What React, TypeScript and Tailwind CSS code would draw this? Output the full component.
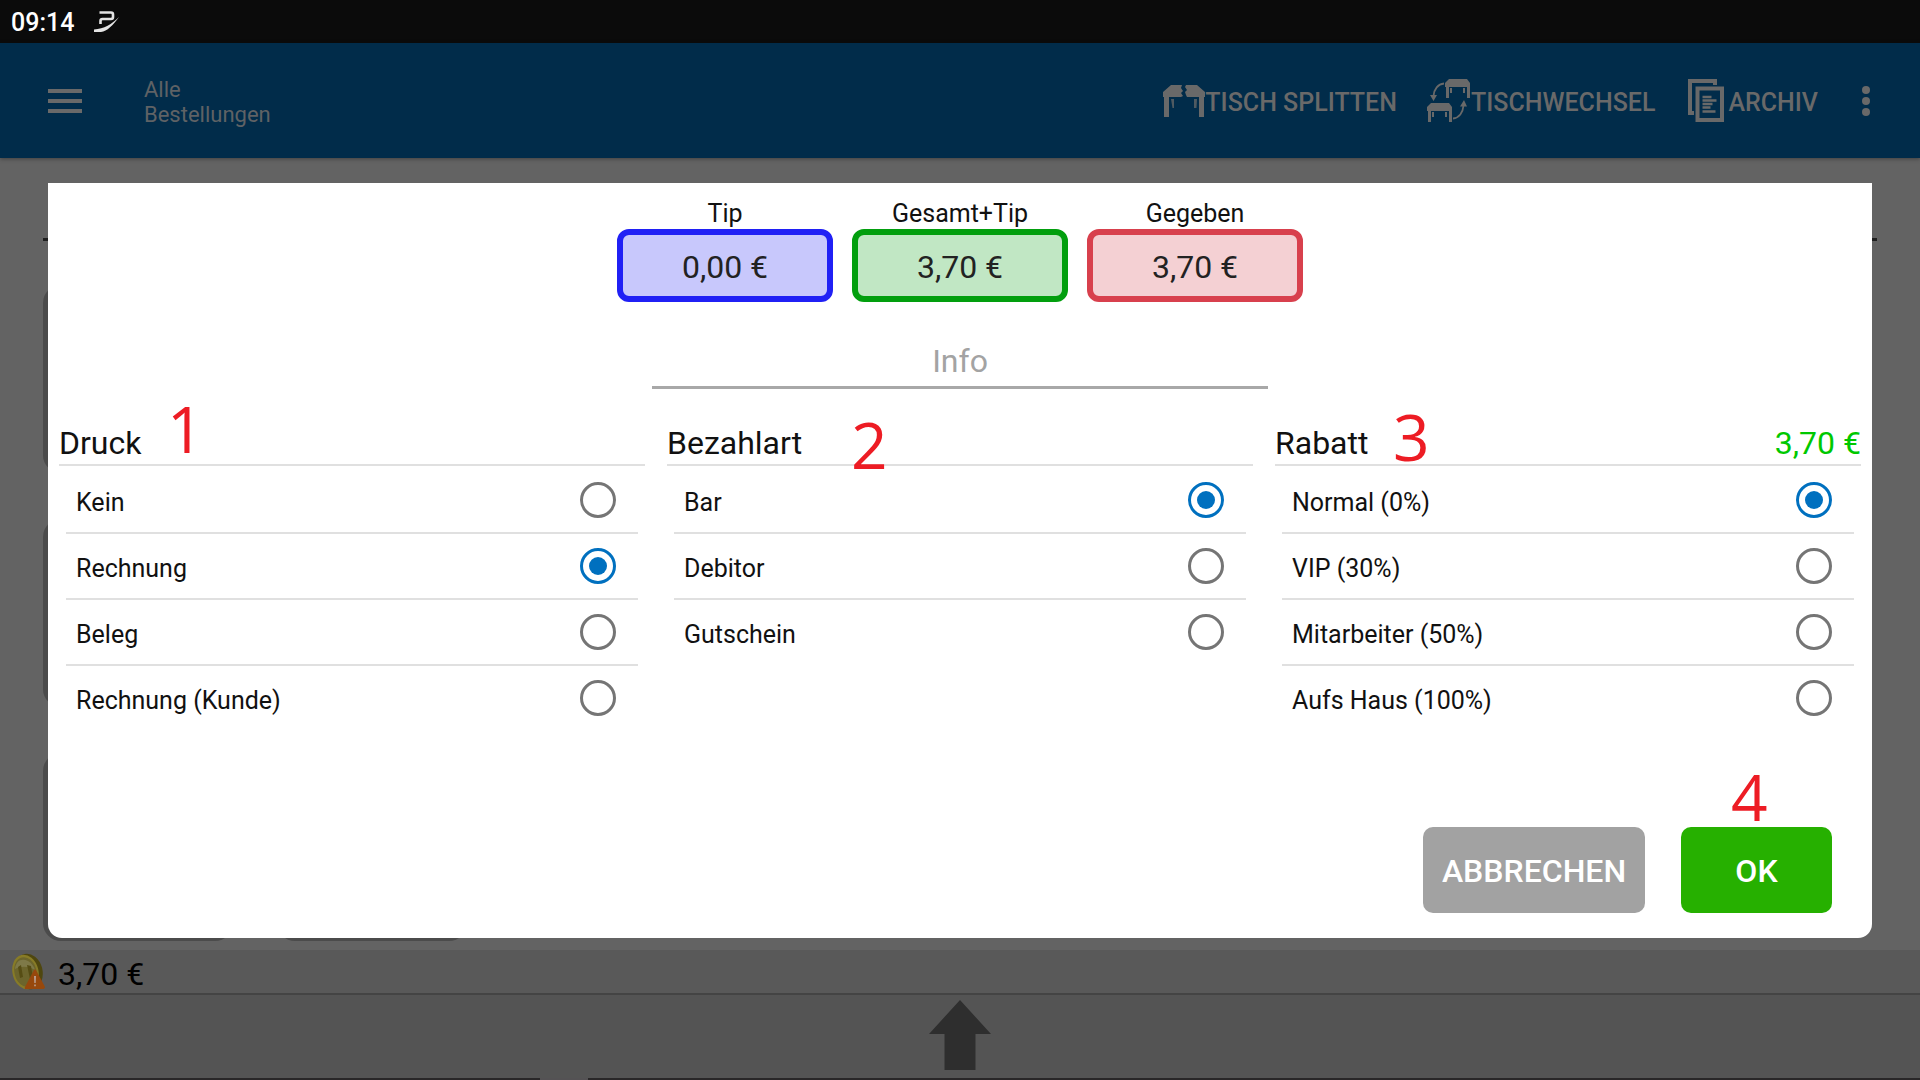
import type { ReactNode } from "react";
import clsx from "clsx";

type Group = {
  id: string;
  title: string;
  options: string[];
  selected: string;
  amount?: string;
  marker: string;
  markerClass: string;
};

const groups: Group[] = [
  {
    id: "druck",
    title: "Druck",
    options: ["Kein", "Rechnung", "Beleg", "Rechnung (Kunde)"],
    selected: "Rechnung",
    marker: "1",
    markerClass: "left-[108px] -top-6",
  },
  {
    id: "bezahlart",
    title: "Bezahlart",
    options: ["Bar", "Debitor", "Gutschein"],
    selected: "Bar",
    marker: "2",
    markerClass: "left-[184px] -top-2",
  },
  {
    id: "rabatt",
    title: "Rabatt",
    options: ["Normal (0%)", "VIP (30%)", "Mitarbeiter (50%)", "Aufs Haus (100%)"],
    selected: "Normal (0%)",
    amount: "3,70 €",
    marker: "3",
    markerClass: "left-[118px] -top-4",
  },
];

const amounts = [
  { id: "tip", label: "Tip", value: "0,00 €", box: "border-[#2020f5] bg-[#c8c8fc]" },
  { id: "gesamt", label: "Gesamt+Tip", value: "3,70 €", box: "border-[#029f0e] bg-[#c1e7c4]" },
  { id: "gegeben", label: "Gegeben", value: "3,70 €", box: "border-[#d8404d] bg-[#f4d0d3]" },
];

function BrandIcon() {
  return (
    <svg viewBox="0 0 26 22" className="w-[26px] h-[22px]" fill="none">
      <path d="M5.500 1.500H17q2 0 2 2V6q0 2-2 2H8.500q-2 0-2 2V13" stroke="#e4e4e4" strokeWidth="2.600" />
      <path d="M0 18.500C10 18 18 13 25 6C19 14 13 20.500 7 21H0Z" fill="#e4e4e4" />
    </svg>
  );
}

function SplitTableIcon() {
  return (
    <svg viewBox="0 0 42 34" className="w-[42px] h-[34px]" fill="currentColor">
      <path d="M0 8L8 1H19l-1 3 2 3-2 2 2 3-2 1H6V33H1V13H0Z" />
      <path d="M42 8L34 1H23l-1 2 2 3-2 2 1 3 1 2H36V33h5V13h1Z" />
      <path d="M8 15h3v9H9.500ZM31 15h3l-.5 9H31Z" opacity=".75" />
    </svg>
  );
}

function SwapTableIcon() {
  return (
    <svg viewBox="0 0 44 44" className="w-11 h-11" fill="currentColor">
      <path d="M18 4L22 0H40l3 4V19H40V8H22V19H19V8H18ZM23 9h2v5h-2ZM36 9h2v5h-2Z" />
      <path d="M0 28L4 24H22l3 4V43H22V32H4V43H1V32H0ZM5 33h2v5H5ZM18 33h2v5h-2Z" />
      <path d="M17 4.500C11 5 7 10 6.500 17M26 39.500c6-.5 10-6 10.500-13" fill="none" stroke="currentColor" strokeWidth="1.800" />
      <path d="M3 16h7l-3.500 6ZM33 27.500h7L37 21Z" />
    </svg>
  );
}

function ArchiveIcon() {
  return (
    <svg viewBox="0 0 36 44" className="w-9 h-11" fill="none" stroke="currentColor">
      <path d="M6 34H2V2H27V6" strokeWidth="4" />
      <path d="M9.500 9.500H34V41H9.500Z" strokeWidth="4" />
      <path d="M14.500 18h9M14.500 21.500h14M14.500 25h10M14.500 28.500h8M14.500 32.500h13" strokeWidth="2.600" />
    </svg>
  );
}

function CoinIcon() {
  return (
    <svg viewBox="0 0 36 38" className="w-9 h-[38px]">
      <ellipse cx="18.500" cy="18.500" rx="14" ry="18" transform="rotate(-14 18.500 18.500)" fill="#4f470f" />
      <ellipse cx="15.500" cy="19" rx="13" ry="17.500" transform="rotate(-14 15.500 19)" fill="#877b27" />
      <ellipse cx="15.500" cy="19" rx="11" ry="15" transform="rotate(-14 15.500 19)" fill="#6c652c" />
      <path d="M5 16C6 8 11 5 18 8C22 10 24 14 25 17C18 13 11 13 5 16Z" fill="#7e7948" />
      <path d="M8 14l3-2 2 12-3 1ZM17 12l4 1 2 12-3 1Z" fill="#564d14" />
      <path d="M24 17q1-1.500 2 0L35 34q0 2-2 2H16q-2 0-1-2Z" fill="#97480c" />
      <path d="M24 23h2l-.3 7h-1.400ZM24.200 31.500h1.600v1.800h-1.600Z" fill="#b9a091" />
    </svg>
  );
}

function HeaderAction({ icon, label, className }: { icon: ReactNode; label: string; className?: string }) {
  return (
    <button type="button" className={clsx("flex items-center text-[25px] leading-8 font-medium", className)}>
      {icon}
      <span className="pt-1">{label}</span>
    </button>
  );
}

function Marker({ value, className }: { value: string; className: string }) {
  return (
    <span
      className={clsx(
        "absolute z-10 pointer-events-none font-['Open_Sans',sans-serif] text-[64px] leading-none text-[#ed1c24]",
        className,
      )}
    >
      {value}
    </span>
  );
}

function OptionGroup({ group }: { group: Group }) {
  return (
    <section role="radiogroup" aria-labelledby={`${group.id}-title`}>
      <div className="relative flex items-center justify-between h-[45px] border-b-2 border-[#e0e0e0] text-[32px]">
        <h2 id={`${group.id}-title`}>{group.title}</h2>
        {group.amount && <span className="text-[#00c800]">{group.amount}</span>}
        <Marker value={group.marker} className={group.markerClass} />
      </div>
      <div className="px-[7px] pt-0.5">
        {group.options.map((option) => (
          <label
            key={option}
            className="flex items-center justify-between h-[66px] pl-2.5 pr-[22px] border-b-2 border-[#e0e0e0] last:border-transparent text-[25px]"
          >
            <span className="pt-1.5">{option}</span>
            <input
              type="radio"
              name={group.id}
              defaultChecked={option === group.selected}
              className="appearance-none shrink-0 w-9 h-9 p-1.5 rounded-full border-[3px] border-[#757575] bg-clip-content checked:border-[#0070bf] checked:bg-[#0070bf]"
            />
          </label>
        ))}
      </div>
    </section>
  );
}

function PaymentDialog() {
  return (
    <div
      role="dialog"
      aria-label="Bezahlen"
      className="relative flex-1 flex flex-col bg-white rounded-b-[14px] pt-4 px-[11px] pb-[25px] text-[#111]"
    >
      <div className="flex justify-center gap-[19px]">
        {amounts.map((amount) => (
          <div key={amount.id} className="flex flex-col items-center">
            <label htmlFor={amount.id} className="text-[25px] leading-[30px]">
              {amount.label}
            </label>
            <input
              id={amount.id}
              defaultValue={amount.value}
              className={clsx(
                "w-[216px] h-[73px] pt-0.5 rounded-xl border-[6px] text-center text-[32px] text-[#222]",
                amount.box,
              )}
            />
          </div>
        ))}
      </div>

      <input
        aria-label="Info"
        placeholder="Info"
        className="self-center mt-9 w-[616px] max-w-full h-[51px] pb-0.5 border-b-3 border-[#a8a8a8] text-center text-[32px] placeholder:text-[#a3a3a3]"
      />

      <div className="grid grid-cols-3 gap-[22px] mt-8">
        {groups.map((group) => (
          <OptionGroup key={group.id} group={group} />
        ))}
      </div>

      <div className="flex justify-end gap-9 mt-auto pr-[29px] text-[32px] font-medium text-white">
        <button type="button" className="w-[222px] h-[86px] pt-0.5 rounded-[10px] bg-[#a2a2a2]">
          ABBRECHEN
        </button>
        <div className="relative">
          <Marker value="4" className="left-[50px] -top-[62px]" />
          <button type="button" className="w-[151px] h-[86px] pt-0.5 rounded-[10px] bg-[#26b000]">
            OK
          </button>
        </div>
      </div>
    </div>
  );
}

export default function App() {
  return (
    <div className="min-h-screen flex flex-col bg-[#636363] font-[Roboto,sans-serif]">
      <div className="flex items-center gap-5 h-[43px] pl-[11px] bg-[#0b0b0b] text-white text-[25px] font-medium">
        <span className="pt-[3px]">09:14</span>
        <BrandIcon />
      </div>

      <header className="flex items-center h-[115px] pl-12 pr-[49px] bg-[#012c4a] text-[#696969] shadow-[0_1px_4px_rgba(0,0,0,0.35)]">
        <button type="button" aria-label="Menü">
          <svg viewBox="0 0 34 24" className="w-[34px] h-6" fill="currentColor">
            <path d="M0 0h34v4H0ZM0 10h34v4H0ZM0 20h34v4H0Z" />
          </svg>
        </button>
        <h1 className="ml-[62px] pt-0.5 w-40 text-[22px] leading-[25px] text-[#5f6265]">Alle Bestellungen</h1>
        <div className="flex items-center ml-auto">
          <HeaderAction icon={<SplitTableIcon />} label="TISCH SPLITTEN" />
          <HeaderAction icon={<SwapTableIcon />} label="TISCHWECHSEL" className="ml-[30px]" />
          <HeaderAction icon={<ArchiveIcon />} label="ARCHIV" className="ml-[33px] gap-1" />
          <button type="button" aria-label="Mehr" className="ml-[43px]">
            <svg viewBox="0 0 10 30" className="w-2.5 h-[30px]" fill="currentColor">
              <circle cx="5" cy="4" r="4" />
              <circle cx="5" cy="15" r="4" />
              <circle cx="5" cy="26" r="4" />
            </svg>
          </button>
        </div>
      </header>

      <main className="relative flex-1 flex flex-col pt-[25px] px-12 pb-3">
        {/* table cards and divider, mostly covered by the dialog */}
        <div className="absolute inset-x-[43px] top-20 bottom-[9px] flex flex-col border-t-[3px] border-[#1f1f1f]">
          <div className="flex-1 grid grid-cols-[190px_190px] content-end gap-x-[44px] gap-y-[46px]">
            {[0, 1, 2, 3, 4, 5].map((card) => (
              <div key={card} className="h-[188px] rounded-[18px] bg-[#4b4b4b]" />
            ))}
          </div>
        </div>
        <PaymentDialog />
      </main>

      <footer>
        <div className="flex items-center gap-3 h-[45px] pl-2.5 border-b-2 border-[#444] bg-[#595959] text-[32px] text-black">
          <CoinIcon />
          <span className="pt-1">3,70 €</span>
        </div>
        <div className="flex items-center justify-center h-[83px] pb-[3px] bg-[#545454]">
          <button type="button" aria-label="Öffnen">
            <svg viewBox="0 0 62 70" className="w-[62px] h-[70px]" fill="#2e2e2e">
              <path d="M31 0L62 34H46.500V70H15.500V34H0Z" />
            </svg>
          </button>
        </div>
        <div className="h-0.5 pl-[540px] bg-[#292728]">
          <div className="w-12 h-0.5 bg-[#545254]" />
        </div>
      </footer>
    </div>
  );
}
